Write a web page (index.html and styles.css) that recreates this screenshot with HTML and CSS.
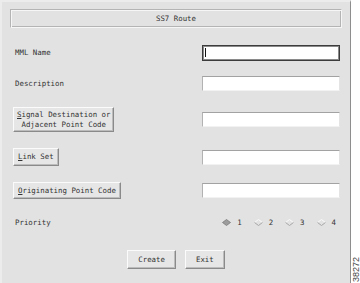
FILE: index.html
```html
<!DOCTYPE html>
<html lang="en">
<head>
  <meta charset="UTF-8" />
  <title>SS7 Route</title>
  <link rel="stylesheet" href="styles.css">
</head>
<body>
  <div class="screen">
    <div class="panel">
      <div class="title">SS7 Route</div>

      <div class="row row-mml">
        <span class="label">MML Name</span>
        <div class="field focused"><span class="caret"></span></div>
      </div>

      <div class="row row-desc">
        <span class="label">Description</span>
        <div class="field"></div>
      </div>

      <div class="row row-dest">
        <button class="btn btn-two"><u>S</u>ignal Destination or<br>Adjacent Point Code</button>
        <div class="field"></div>
      </div>

      <div class="row row-link">
        <button class="btn"><u>L</u>ink Set</button>
        <div class="field"></div>
      </div>

      <div class="row row-opc">
        <button class="btn"><u>O</u>riginating Point Code</button>
        <div class="field"></div>
      </div>

      <div class="row row-priority">
        <span class="label">Priority</span>
        <div class="radios">
          <span class="radio">
            <svg class="diamond" width="9" height="7" viewBox="0 0 9 7">
              <polygon points="4.5,0.5 8.5,3.5 4.5,6.5 0.5,3.5" fill="#9c9c9c" stroke="#7a7a7a" stroke-width="0.8"/>
            </svg>1</span>
          <span class="radio">
            <svg class="diamond" width="9" height="7" viewBox="0 0 9 7">
              <polyline points="0.5,3.5 4.5,0.5 8.5,3.5" fill="none" stroke="#fafafa" stroke-width="1"/>
              <polyline points="0.5,3.5 4.5,6.5 8.5,3.5" fill="none" stroke="#a6a6a6" stroke-width="1"/>
            </svg>2</span>
          <span class="radio">
            <svg class="diamond" width="9" height="7" viewBox="0 0 9 7">
              <polyline points="0.5,3.5 4.5,0.5 8.5,3.5" fill="none" stroke="#fafafa" stroke-width="1"/>
              <polyline points="0.5,3.5 4.5,6.5 8.5,3.5" fill="none" stroke="#a6a6a6" stroke-width="1"/>
            </svg>3</span>
          <span class="radio">
            <svg class="diamond" width="9" height="7" viewBox="0 0 9 7">
              <polyline points="0.5,3.5 4.5,0.5 8.5,3.5" fill="none" stroke="#fafafa" stroke-width="1"/>
              <polyline points="0.5,3.5 4.5,6.5 8.5,3.5" fill="none" stroke="#a6a6a6" stroke-width="1"/>
            </svg>4</span>
        </div>
      </div>

      <div class="actions">
        <button class="btn btn-action">Create</button>
        <button class="btn btn-action">Exit</button>
      </div>
    </div>
    <div class="side">
      <span class="fig">38272</span>
    </div>
  </div>
</body>
</html>
```

FILE: styles.css
```css
* {
  box-sizing: border-box;
  margin: 0;
  padding: 0;
}

body {
  font-family: "DejaVu Sans Mono", monospace;
  font-size: 7.4px;
  color: #333;
  background: #fff;
}

.screen {
  display: flex;
  width: 360px;
  height: 283px;
}

.panel {
  width: 351px;
  height: 283px;
  background-color: #e2e2e2;
  border-right: 1px solid #8e8e8e;
  border-left: 2px solid #ececec;
  border-top: 2px solid #ececec;
  padding-top: 7px;
}

.title {
  margin: 0 8px 0 8px;
  height: 19px;
  line-height: 17px;
  text-align: center;
  border: 1px solid;
  border-color: #b4b4b4 #f6f6f6 #f6f6f6 #b4b4b4;
  box-shadow: inset 1px 1px 0 #f6f6f6, inset -1px -1px 0 #b4b4b4;
}

/* form rows */
.row {
  display: flex;
  align-items: center;
  justify-content: space-between;
  padding: 0 10px 0 11px;
}

.row-mml { height: 17px; margin-top: 16px; }
.row-desc { height: 16px; margin-top: 14px; }
.row-dest { height: 25px; margin-top: 16px; }
.row-link { height: 18px; margin-top: 16px; }
.row-opc { height: 18px; margin-top: 15px; }
.row-priority { height: 14px; margin-top: 16px; padding-right: 14px; }

.label {
  padding-left: 2px;
}

.field {
  width: 138px;
  height: 15px;
  background: #fff;
  border: 1px solid;
  border-color: #a2a2a2 #e4e4e4 #f2f2f2 #b2b2b2;
  display: flex;
  align-items: center;
}

.row-mml .field {
  height: 16px;
}

.field.focused {
  border: 1px solid #3c3c3c;
  box-shadow: inset 0 0 0 1px #8a8a8a;
}

.caret {
  width: 1px;
  height: 9px;
  margin-left: 2px;
  background: #111;
}

/* motif style buttons */
.btn {
  font-family: inherit;
  font-size: inherit;
  color: inherit;
  background: #e6e6e6;
  border: 1px solid;
  border-color: #fbfbfb #8a8a8a #8a8a8a #fbfbfb;
  box-shadow: inset -1px -1px 0 #bcbcbc;
  padding: 0 4px;
  height: 18px;
  line-height: 16px;
  white-space: nowrap;
}

.row-opc .btn {
  height: 17px;
}

.btn-two {
  height: 25px;
  line-height: 10.5px;
  padding: 1px 3px 0;
}

.btn u {
  text-decoration: underline;
  text-underline-offset: 1px;
}

.radios {
  display: flex;
  gap: 12px;
}

.radio {
  display: flex;
  align-items: center;
  gap: 6px;
}

.diamond {
  display: block;
}

.actions {
  display: flex;
  justify-content: center;
  gap: 9px;
  margin-top: 21px;
}

.btn-action {
  height: 19px;
  padding: 0 10px;
}

/* figure number strip */
.side {
  flex: 1;
  display: flex;
  align-items: flex-end;
  justify-content: center;
  padding-bottom: 1px;
}

.fig {
  writing-mode: vertical-rl;
  transform: rotate(180deg);
  font-family: "Liberation Sans", sans-serif;
  font-size: 9px;
  line-height: 8px;
  color: #444;
}
```
